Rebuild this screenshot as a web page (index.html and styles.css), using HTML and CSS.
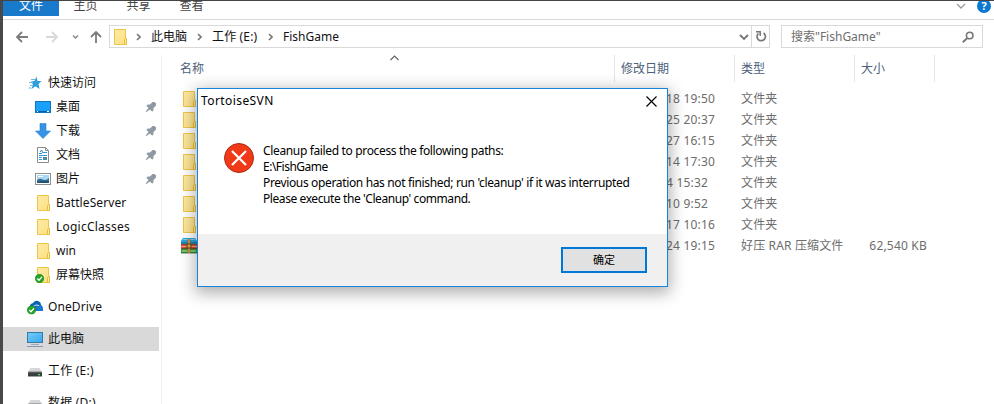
FILE: index.html
```html
<!DOCTYPE html>
<html lang="zh-CN">
<head>
<meta charset="utf-8">
<title>FishGame</title>
<link rel="stylesheet" href="styles.css">
</head>
<body>
<svg class="defs" width="0" height="0" aria-hidden="true">
  <defs>
    <linearGradient id="fold" x1="0" y1="0" x2="1" y2="1"><stop offset="0" stop-color="#ffeba6"/><stop offset="1" stop-color="#fbdf80"/></linearGradient>
    <linearGradient id="screen" x1="0" y1="0" x2="1" y2="1"><stop offset="0" stop-color="#77cdf8"/><stop offset="1" stop-color="#35a8f0"/></linearGradient>
    <symbol id="folder" viewBox="0 0 16 18"><path d="M2.500 1.500h11v9h1v6h-12z" fill="url(#fold)" stroke="#edc647"/><path d="M12.500 16.500v-5l1-1h1v6z" fill="#ffeb9f" stroke="#e8bc38"/></symbol>
    <symbol id="pin" viewBox="0 0 12 12"><path d="M7.500 1H10v1h1v2.500l-2.500 2.500L8.300 10 7 10.500 5 8.500 1.500 11l-.7-.7L3.500 7 1.500 5 2 3.700l3-.2z" fill="#8e99a3"/></symbol>
    <symbol id="tick" viewBox="0 0 9 9"><circle cx="4.500" cy="4.500" r="4.200" fill="#27a527" stroke="#16821b" stroke-width=".6"/><path d="M2.300 4.500l1.700 1.700 2.900-3.300" fill="none" stroke="#fff" stroke-width="1.300"/></symbol>
    <symbol id="drive" viewBox="0 0 16 16"><path d="M3.500 5h9L15 9H1z" fill="#d5d7d9"/><rect x="1" y="9" width="14" height="4.500" rx=".6" fill="#3c3f42"/><path d="M1.500 9h13" stroke="#777"/><rect x="11" y="11" width="2" height="1.300" fill="#38ee54"/></symbol>
    <symbol id="crumb" viewBox="0 0 5 8"><path d="M1 1l3 3-3 3" fill="none" stroke="#777" stroke-width="1.600"/></symbol>
  </defs>
</svg>
<div class="window">
  <nav class="ribbon">
    <span class="tab file">文件</span><span class="tab">主页</span><span class="tab">共享</span><span class="tab">查看</span>
    <svg class="expand" width="10" height="8"><path d="M1 2l4 4 4-4" fill="none" stroke="#999" stroke-width="1.300"/></svg>
    <span class="help">?</span>
  </nav>
  <div class="toolbar">
    <svg class="nav" width="106" height="24">
      <path d="M14 13h11M19 8l-5 5 5 5" fill="none" stroke="#7b7b7b" stroke-width="1.800"/>
      <path d="M43 13h11M49 8l5 5-5 5" fill="none" stroke="#d8d8d8" stroke-width="1.800"/>
      <path d="M70 11.500l2.500 2.500 2.500-2.500" fill="none" stroke="#888" stroke-width="1.500"/>
      <path d="M93 19V8M88 13l5-5 5 5" fill="none" stroke="#7b7b7b" stroke-width="1.800"/>
    </svg>
    <div class="address">
      <svg class="afolder" width="16" height="18"><use href="#folder"/></svg>
      <svg class="sep" width="5" height="8"><use href="#crumb"/></svg><span class="cr c1">此电脑</span>
      <svg class="sep" width="5" height="8"><use href="#crumb"/></svg><span class="cr c2">工作 (E:)</span>
      <svg class="sep" width="5" height="8"><use href="#crumb"/></svg><span class="cr c3">FishGame</span>
      <svg class="drop" width="10" height="8"><path d="M1 2l4 4 4-4" fill="none" stroke="#777" stroke-width="1.900"/></svg>
      <span class="refresh"><svg width="12" height="13"><path d="M3.500 3.300A4.200 4.200 0 1 0 8.500 3" fill="none" stroke="#777" stroke-width="1.700"/><path d="M1 1.800h4.200V6" fill="none" stroke="#777" stroke-width="1.500"/></svg></span>
    </div>
    <div class="search"><span>搜索"FishGame"</span><svg width="12" height="12"><circle cx="7.700" cy="4.500" r="3.300" fill="none" stroke="#777" stroke-width="1.600"/><path d="M5.300 7L.8 11.200" stroke="#777" stroke-width="1.900"/></svg></div>
  </div>
  <div class="content">
    <aside class="side">
      <div class="item root"><svg width="16" height="16"><path d="M9.500 1.500l1 4.500h4L11.500 9l1 5-4-2.800L4.500 14 6 9.500 4 6.500l3.500-.5z" fill="#2c9ddd"/><path d="M4 4.500h4M2 7.500h4M3 10.500h3M1.500 13h3" stroke="#69bce9"/></svg><span>快速访问</span></div>
      <div class="item"><svg width="16" height="16"><rect x=".5" y="2.500" width="15" height="11" fill="#18a0fb" stroke="#1474b9"/><path d="M1 12.500h14" stroke="#0b62a4"/><path d="M2 12.500h1M12 12.500h2" stroke="#fff"/></svg><span>桌面</span><svg class="pin" width="12" height="12"><use href="#pin"/></svg></div>
      <div class="item"><svg width="16" height="16"><path d="M5 .5h6v7.500h4.500L8 15.500.5 8H5z" fill="#3493e6" stroke="#287fca" stroke-width=".6"/></svg><span>下载</span><svg class="pin" width="12" height="12"><use href="#pin"/></svg></div>
      <div class="item"><svg width="16" height="16"><path d="M2.500.5h8l3 3v12h-11z" fill="#fff" stroke="#8b8b8b"/><path d="M10.500.5v3h3" fill="none" stroke="#8b8b8b"/><path d="M4 6.500h3M4 8.500h8M4 10.500h3M4 12.500h3M8 5.500h4" stroke="#3398d6"/><path d="M5 5l1.500-2L8 6" fill="none" stroke="#2385c6"/><rect x="8" y="10" width="4" height="3" fill="#4d8b9c"/></svg><span>文档</span><svg class="pin" width="12" height="12"><use href="#pin"/></svg></div>
      <div class="item"><svg width="16" height="16"><rect x=".5" y="2.500" width="15" height="11" fill="#fff" stroke="#8e8e8e"/><path d="M2 4h12v8H2z" fill="#a8d8f5"/><path d="M2 9q3-2 6-.5t6-1.500v5H2z" fill="#386f91"/><path d="M2 11q5-2 12-1v2H2z" fill="#255475"/><path d="M3 5.500h5" stroke="#fff"/></svg><span>图片</span><svg class="pin" width="12" height="12"><use href="#pin"/></svg></div>
      <div class="item"><svg width="16" height="18"><use href="#folder"/></svg><span class="bs">BattleServer</span></div>
      <div class="item"><svg width="16" height="18"><use href="#folder"/></svg><span class="lc">LogicClasses</span></div>
      <div class="item"><svg width="16" height="18"><use href="#folder"/></svg><span>win</span></div>
      <div class="item"><svg width="16" height="18"><use href="#folder"/><use href="#tick" x="0" y="8" width="9" height="9"/></svg><span>屏幕快照</span></div>
      <div class="item root gap"><svg width="16" height="16"><path d="M3 9q-1-4 3-5 2-3 5-2 3 1 3 4 2 1 2 5H6z" fill="#0864b1"/><path d="M6 12q-1-4 3-4 1-3 4-2 2 1 2 2.500 1.500.5 1.500 3.500z" fill="#1979d2"/><path d="M6 7.500q3-2.500 6-1" stroke="#fff" fill="none" stroke-width=".8"/><use href="#tick" x="0" y="6.500" width="9" height="9"/></svg><span class="bs">OneDrive</span></div>
      <div class="item root gap selected"><svg width="16" height="17"><rect x=".5" y="1.500" width="15" height="10" fill="url(#screen)" stroke="#357ba5"/><path d="M4 13.500h8" stroke="#98adbb"/><path d="M0 15.500h16" stroke="#8799b2"/></svg><span>此电脑</span></div>
      <div class="item root gap"><svg width="16" height="16"><use href="#drive"/></svg><span class="lc">工作 (E:)</span></div>
      <div class="item root gap"><svg width="16" height="16"><use href="#drive"/></svg><span class="lc">数据 (D:)</span></div>
    </aside>
    <main class="files">
      <div class="row head"><span class="name">名称<svg class="sort" width="9" height="6"><path d="M.5 5l4-4 4 4" fill="none" stroke="#666" stroke-width="1.200"/></svg></span><span class="date">修改日期</span><span class="type">类型</span><span class="size">大小</span></div>
      <div class="row"><span class="name"><svg width="16" height="18"><use href="#folder"/></svg></span><span class="date">18 19:50</span><span class="type">文件夹</span></div>
      <div class="row"><span class="name"><svg width="16" height="18"><use href="#folder"/></svg></span><span class="date">25 20:37</span><span class="type">文件夹</span></div>
      <div class="row"><span class="name"><svg width="16" height="18"><use href="#folder"/></svg></span><span class="date">27 16:15</span><span class="type">文件夹</span></div>
      <div class="row"><span class="name"><svg width="16" height="18"><use href="#folder"/></svg></span><span class="date">14 17:30</span><span class="type">文件夹</span></div>
      <div class="row"><span class="name"><svg width="16" height="18"><use href="#folder"/></svg></span><span class="date">4 15:32</span><span class="type">文件夹</span></div>
      <div class="row"><span class="name"><svg width="16" height="18"><use href="#folder"/></svg></span><span class="date">10 9:52</span><span class="type">文件夹</span></div>
      <div class="row"><span class="name"><svg width="16" height="18"><use href="#folder"/></svg></span><span class="date">17 10:16</span><span class="type">文件夹</span></div>
      <div class="row"><span class="name rar"><svg width="16" height="16"><path d="M2 0h12l2 3v3H0V3z" fill="#28a3df"/><path d="M2 1.500h12" stroke="#7fd3f4"/><path d="M0 4.500h16" stroke="#1b7fb8"/><path d="M0 6h16v5H0z" fill="#d94b32"/><path d="M0 8.500h16" stroke="#f3a08e"/><path d="M0 11h16v4H0z" fill="#36a23d"/><path d="M1 13h14" stroke="#b9ec83"/><path d="M0 6h16M0 10.700h16M0 15h16" stroke="#24482e" stroke-width=".7"/><path d="M6.500 1h3v14h-3z" fill="#9c6930"/><path d="M7.500 1h1v14h-1z" fill="#efbe61"/><path d="M6 6h4v4H6z" fill="#e3a747" stroke="#5e3c19"/></svg></span><span class="date">24 19:15</span><span class="type">好压 RAR 压缩文件</span><span class="size">62,540 KB</span></div>
    </main>
  </div>
</div>
<section class="dialog" role="dialog">
  <header><span class="title">TortoiseSVN</span><svg width="11" height="11"><path d="M.5.5l10 10M10.500.5l-10 10" stroke="#000" stroke-width="1.200"/></svg></header>
  <div class="message">
    <svg width="30" height="30"><circle cx="15" cy="15" r="14.500" fill="#f03a17" stroke="#ae2a16"/><path d="M8 8l14 14M22 8L8 22" stroke="#fff" stroke-width="2.200"/></svg>
    <div class="lines"><p>Cleanup failed to process the following paths:</p><p class="path">E:\FishGame</p><p>Previous operation has not finished; run 'cleanup' if it was interrupted</p><p class="last">Please execute the 'Cleanup' command.</p></div>
  </div>
  <footer><button>确定</button></footer>
</section>
</body>
</html>
```
FILE: styles.css
```css
* { box-sizing: border-box; }
body { margin: 0; width: 994px; height: 404px; overflow: hidden; position: relative; background: #fff; color: #111; font: 12px/16px "Noto Sans", "Noto Sans CJK SC", sans-serif; white-space: nowrap; }
.defs { position: absolute; }
svg { flex: none; display: block; }
.window { height: 404px; border-left: 3px solid #49484a; border-top: 1px solid #444; overflow: hidden; }
.ribbon { height: 19px; border-bottom: 1px solid #dadada; display: flex; align-items: flex-start; color: #444; }
.tab { width: 53px; height: 15px; line-height: 9px; text-align: center; }
.tab.file { width: 56px; background: #1979ca; color: #fff; }
.expand { margin: 1px 11px 0 auto; }
.help { width: 14px; height: 14px; border-radius: 50%; margin: -2px 3px 0 0; background: #0b78d4; color: #fff; font: bold 11px/14px "Noto Sans", sans-serif; text-align: center; }
.toolbar { display: flex; height: 35px; padding-top: 5px; }
.nav { margin-top: -1px; }
.address { width: 661px; height: 23px; border: 1px solid #d9d9d9; display: flex; align-items: center; }
.afolder { margin: 0 8px 0 2px; }
.sep { margin-right: 10px; }
.cr { flex: none; }
.c1 { width: 46px; }
.c2 { width: 56px; letter-spacing: .15px; }
.drop { margin-left: auto; }
.refresh { width: 18px; height: 21px; border-left: 1px solid #d9d9d9; margin-left: 2px; display: flex; align-items: center; justify-content: center; }
.search { margin-left: 11px; width: 202px; height: 23px; border: 1px solid #d9d9d9; display: flex; align-items: center; justify-content: space-between; padding: 0 8px 0 9px; color: #6d6d6d; }
.content { display: flex; height: 349px; }
.side { width: 159px; height: 349px; padding-top: 16px; border-right: 1px solid #f0f0f0; flex: none; overflow: hidden; }
.item { display: flex; align-items: center; gap: 5px; height: 24px; padding-left: 32px; width: 156px; }
.item.root { padding-left: 24px; }
.item.gap { margin-top: 8px; }
.selected { background: #d9d9d9; }
.bs { letter-spacing: .1px; }
.lc { letter-spacing: .22px; }
.item .pin { margin: 0 2px 0 auto; }
.files { flex: 1; min-width: 0; }
.row { height: 21px; display: flex; align-items: center; color: #6d6d6d; }
.head { height: 27px; color: #4c607a; margin-bottom: 6px; }
.name { width: 453px; padding-left: 19px; }
.date { width: 120px; padding-left: 51px; letter-spacing: .2px; }
.type { width: 120px; padding-left: 6px; letter-spacing: .15px; }
.size { width: 80px; text-align: right; padding-right: 8px; letter-spacing: .2px; }
.head span { height: 27px; border-right: 1px solid #e5e5e5; line-height: 27px; letter-spacing: 0; }
.head .name { padding-left: 18px; display: flex; }
.head .date, .head .type, .head .size { padding-left: 6px; text-align: left; }
.sort { margin-left: 186px; }
.dialog { position: absolute; left: 197px; top: 88px; width: 471px; height: 199px; border: 1px solid #1883d7; background: #fff; color: #000; box-shadow: 0 4px 15px 2px rgba(0,0,0,.32); display: flex; flex-direction: column; }
.dialog header { height: 24px; padding: 0 10px 0 3px; display: flex; align-items: center; justify-content: space-between; }
.title { letter-spacing: .42px; }
.message { display: flex; padding: 30px 0 0 26px; gap: 9px; flex: 1; }
.lines { letter-spacing: -.35px; }
.lines p { margin: 0; height: 16px; }
.lines .path { letter-spacing: -.5px; }
.lines .last { letter-spacing: -.42px; }
.dialog footer { height: 52px; background: #f0f0f0; display: flex; justify-content: flex-end; padding: 13px 20px; }
.dialog button { width: 86px; height: 26px; border: 2px solid #0078d7; background: #e1e1e1; color: #000; padding: 0; font: 11px/20px "Noto Sans", "Noto Sans CJK SC", sans-serif; }
```
